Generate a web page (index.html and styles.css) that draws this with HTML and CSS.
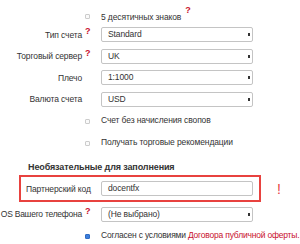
FILE: index.html
```html
<!DOCTYPE html>
<html lang="ru">

<head>
    <meta charset="UTF-8">
    <title>Открытие счета</title>
    <link rel="stylesheet" href="styles.css">
</head>

<body>
    <div class="form">
        <!-- доп. опция счета -->
        <div class="row row-check first">
            <span class="label"></span>
            <span class="box"></span>
            <span class="text">5 десятичных знаков<sup class="help">?</sup></span>
        </div>

        <div class="row row-select">
            <span class="label">Тип счета</span>
            <sup class="help">?</sup>
            <div class="select">Standard<span class="arrow"></span></div>
        </div>
        <div class="row row-select">
            <span class="label">Торговый сервер</span>
            <sup class="help">?</sup>
            <div class="select">UK<span class="arrow"></span></div>
        </div>
        <div class="row row-select">
            <span class="label">Плечо</span>
            <span></span>
            <div class="select">1:1000<span class="arrow"></span></div>
        </div>
        <div class="row row-select">
            <span class="label">Валюта счета</span>
            <span></span>
            <div class="select">USD<span class="arrow"></span></div>
        </div>

        <div class="row row-check">
            <span class="label"></span>
            <span class="box"></span>
            <span class="text">Счет без начисления свопов</span>
        </div>
        <div class="row row-check">
            <span class="label"></span>
            <span class="box"></span>
            <span class="text">Получать торговые рекомендации</span>
        </div>

        <!-- необязательные поля -->
        <h4 class="legend">Необязательные для заполнения</h4>

        <div class="partner">
            <div class="frame">
                <span class="plabel">Партнерский код</span>
                <div class="input">docentfx</div>
            </div>
            <span class="mark">!</span>
        </div>

        <div class="row row-select os">
            <span class="label">OS Вашего телефона</span>
            <sup class="help">?</sup>
            <div class="select">(Не выбрано)<span class="arrow"></span></div>
        </div>

        <div class="row row-check agree">
            <span class="label"></span>
            <span class="box checked"></span>
            <span class="text">Согласен с условиями <a href="#">Договора публичной оферты.</a></span>
        </div>
    </div>
</body>

</html>
```

FILE: styles.css
```css
* {
    padding: 0;
    margin: 0;
    box-sizing: border-box;
}

body {
    width: 300px;
    height: 244px;
    overflow: hidden;
    background: #fff;
    font-family: "Liberation Sans", Arial, sans-serif;
    font-size: 8.5px;
    letter-spacing: -0.12px;
    color: #333;
}

.form {
    display: flex;
    flex-direction: column;
}

.row {
    display: grid;
    grid-template-columns: 82px 19px 152px;
    align-items: center;
}

.label {
    text-align: right;
    white-space: nowrap;
}

.help {
    color: #c8102e;
    font-weight: bold;
    font-size: 9px;
    align-self: start;
    padding-left: 3px;
    line-height: 9px;
}

.text .help {
    padding-left: 4px;
    position: relative;
    top: -3px;
}

.row-check {
    height: 14px;
    grid-template-columns: 82px 19px 199px;
}

.row-check .box {
    width: 5px;
    height: 5px;
    border: 1px solid #ccc;
    border-radius: 1px;
    background: #fafafa;
    justify-self: start;
    margin-left: 3px;
    margin-top: 3px;
}

.row-check .box.checked {
    background: #3d7fdc;
    border-color: #2f6cc4;
}

.row-check .text {
    white-space: nowrap;
}

.first {
    margin-top: 8px;
}

.row-select {
    height: 15px;
    margin-top: 6.5px;
}

.first + .row-select {
    margin-top: 5px;
}

.select {
    height: 15px;
    border: 1px solid #c4c4c4;
    border-radius: 2px;
    background: #fff;
    padding-left: 6px;
    line-height: 13px;
    position: relative;
}

.select .arrow {
    position: absolute;
    right: 2px;
    top: 5px;
    width: 2px;
    height: 3px;
    background: #333;
}

.row-select + .row-check {
    margin-top: 6.5px;
}

.row-check + .row-check {
    margin-top: 8px;
}

.legend {
    font-size: 9px;
    font-weight: bold;
    color: #333;
    margin: 11px 0 0 28px;
    height: 14px;
    line-height: 14px;
}

.partner {
    display: flex;
    align-items: center;
    margin-top: 1px;
}

.frame {
    margin-left: 19px;
    width: 242px;
    height: 27px;
    border: 2px solid #e8423f;
    display: flex;
    align-items: center;
    padding-left: 5px;
}

.plabel {
    width: 75px;
    white-space: nowrap;
}

.input {
    width: 152px;
    height: 15px;
    border: 1px solid #c4c4c4;
    border-radius: 2px;
    padding-left: 6px;
    line-height: 13px;
}

.mark {
    color: #e8423f;
    font-size: 14px;
    margin-left: 16px;
}

.os {
    margin-top: 4.5px;
}

.os .label {
    letter-spacing: -0.25px;
}

.agree {
    margin-top: 7.5px;
}

.agree .text {
    letter-spacing: -0.2px;
}

.agree a {
    color: #c8102e;
    text-decoration: none;
}
```
